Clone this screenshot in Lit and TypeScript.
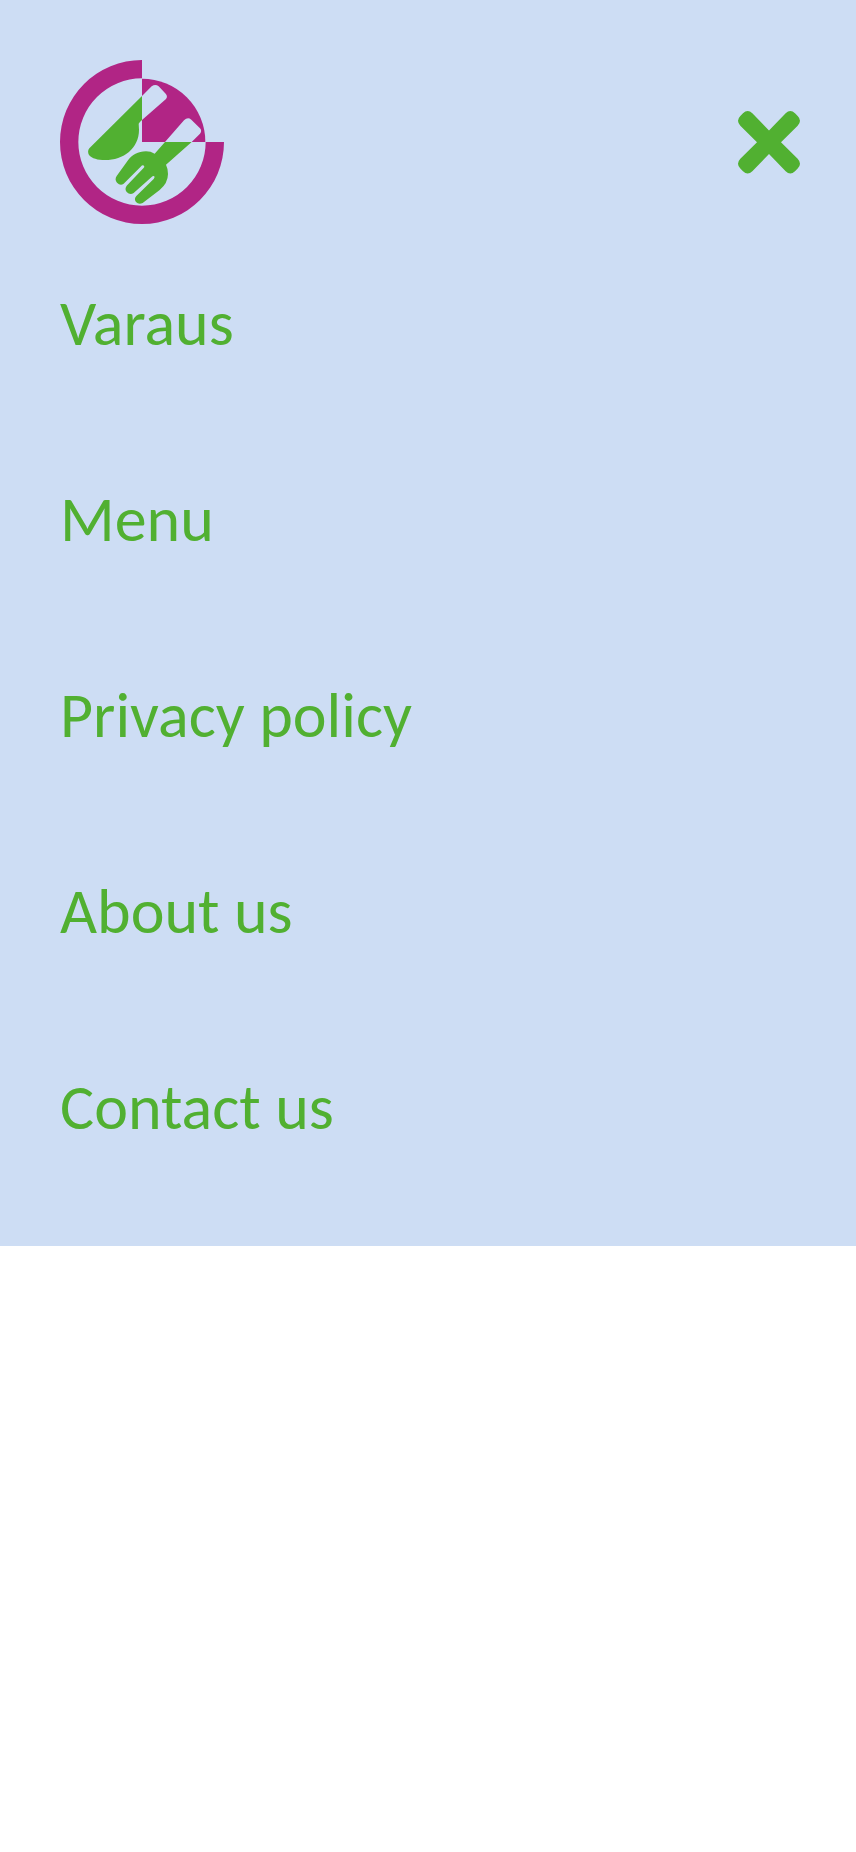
import { LitElement, html, css } from "lit";
import { customElement } from "lit/decorators.js";

@customElement("app-root")
export class AppRoot extends LitElement {
  static styles = css`
    :host { display: block; min-height: 1852px; background: #fff; }
    .panel { box-sizing: border-box; height: 1246px; padding: 60px 56px 0 60px; background: #cdddf4; color: #51b031; }
    .top { display: flex; align-items: center; justify-content: space-between; height: 164px; }
    .logo { display: block; width: 164px; height: 164px; }
    .close { display: block; padding: 0; border: 0; background: none; width: 62px; height: 62px; }
    .close svg { display: block; width: 62px; height: 62.5px; }
    nav { display: flex; flex-direction: column; align-items: flex-start; gap: 118px; padding-top: 60px; }
    a { font: 400 64px/78px Carlito, Lato, sans-serif; color: inherit; text-decoration: none; white-space: nowrap; }
  `;

  private items = ["Varaus", "Menu", "Privacy policy", "About us", "Contact us"];

  render() {
    return html`
      <div class="panel">
        <header class="top">
          <svg class="logo" viewBox="30 30 492 492" aria-hidden="true">
            <path fill="#b12585" d="M276 30A246 246 0 1 0 522 276H467A191 191 0 1 1 276 85Z"/>
            <path fill="#b12585" d="M276 86A190 190 0 0 1 466 276H276Z"/>
            <path fill="#cdddf4" d="M276 138L305 109Q316 101 326 109L347 131Q354 139 348 147L276 210ZM345 276L402 211Q413 200 424 209L450 235Q457 243 450 251L425 276Z"/>
            <path fill="#51b031" d="M276 138L118 295Q111 304 117 315C126 326 143 330 165 330C221 330 267 295 267 239L266 221Q268 217 276 210Z"/>
            <path fill="#51b031" d="M345 276L314 311Q302 304 288 304C264 304 246 315 234 331L200 378Q193 389 201 398Q211 408 221 401L272 350Q278 343 282 347Q285 350 280 355L230 407Q223 417 230 426Q240 436 251 429L304 382Q310 376 313 379Q315 383 311 387L259 438Q251 447 258 456Q266 465 278 459L329 420Q354 399 354 372Q354 356 348 344L425 276Z"/>
          </svg>
          <button class="close" aria-label="Close">
            <svg viewBox="54 63 186 187" preserveAspectRatio="none" fill="#51b031">
              <path d="M147 121L197 70Q211 56 225 70L233 78Q247 92 233 107L183 156.500L233 206Q247 221 233 235L225 243Q211 257 197 243L147 192L97 243Q83 257 69 243L61 235Q47 221 61 206L111 156.500L61 107Q47 92 61 78L69 70Q83 56 97 70Z"/>
            </svg>
          </button>
        </header>
        <nav>${this.items.map((item) => html`<a href="#">${item}</a>`)}</nav>
      </div>
    `;
  }
}
